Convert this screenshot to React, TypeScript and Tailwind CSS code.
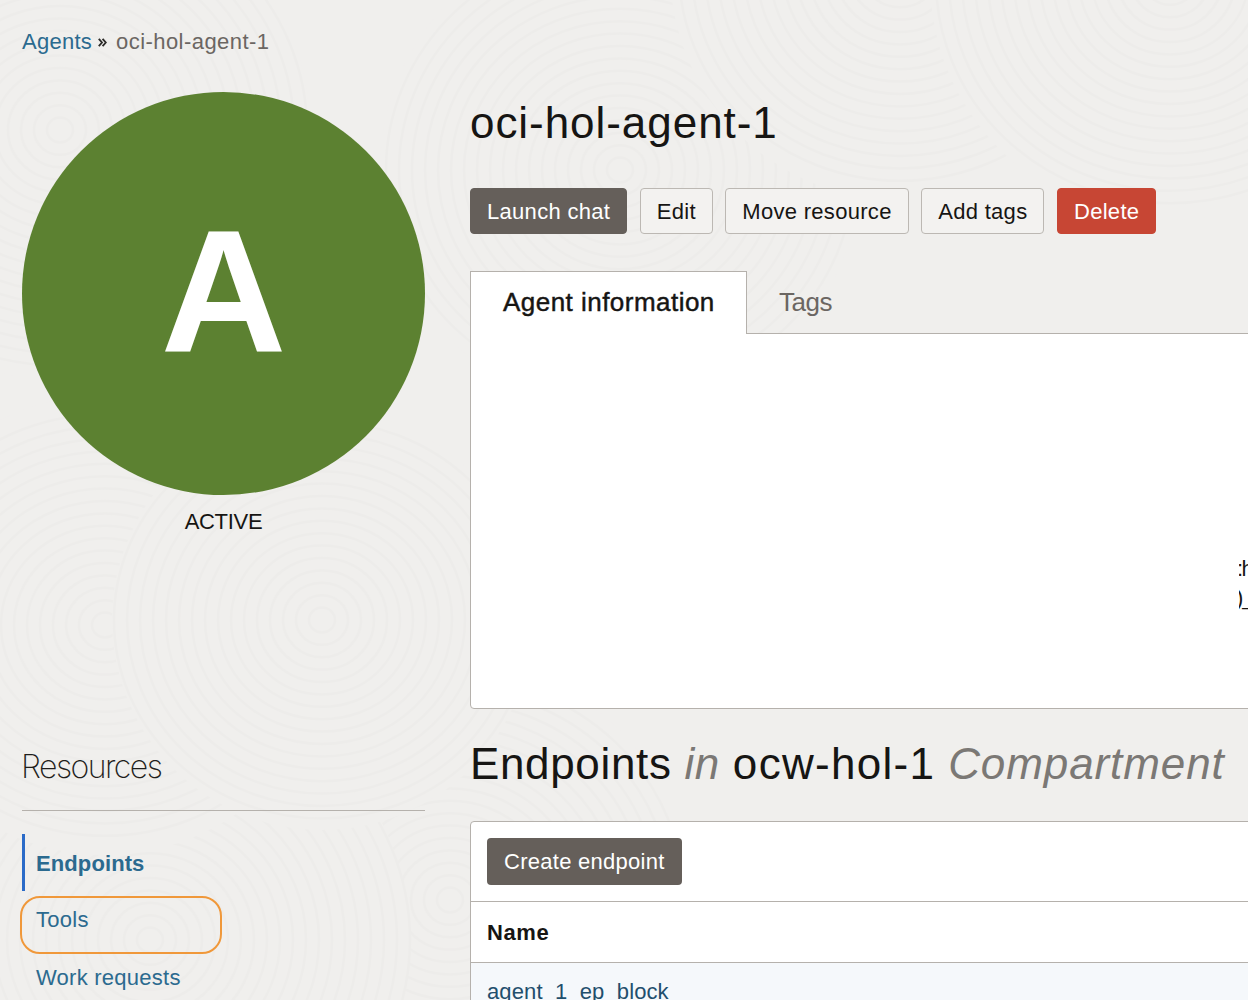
const sans = "font-['Liberation_Sans',Arial,sans-serif]";

// overlapping ring patches for the faint paper texture behind the page
const swirls = [
  { cx: 60, cy: 130, max: 250 },
  { cx: 620, cy: 170, max: 240 },
  { cx: 900, cy: -30, max: 230 },
  { cx: 1170, cy: -20, max: 240 },
  { cx: 450, cy: 900, max: 240 },
  { cx: 150, cy: 940, max: 260 },
  { cx: 105, cy: 625, max: 230 },
  { cx: 322, cy: 620, max: 210 },
];

const Swirls = () => (
  <svg className="absolute inset-0 pointer-events-none" width="1248" height="1000" fill="none" stroke="#edecea" strokeWidth="2.5">
    {swirls.map((s, i) => (
      <g key={i}>
        <circle cx={s.cx} cy={s.cy} r={s.max} fill="#f0efed" stroke="none" />
        {Array.from({ length: Math.floor(s.max / 13) }, (_, k) => (
          <ellipse key={k} cx={s.cx} cy={s.cy} rx={(k + 1) * 13} ry={(k + 1) * 12.4} />
        ))}
      </g>
    ))}
  </svg>
);

const Btn = ({ label, className }: { label: string; className: string }) => (
  <button className={`h-[46px] px-[16px] rounded-[4px] text-[22px] tracking-[0.3px] border ${className}`}>{label}</button>
);

export default function App() {
  return (
    <div className={`relative w-[1248px] h-[1000px] overflow-hidden bg-[#f0efed] text-[#161513] ${sans}`}>
      <Swirls />
      <div className="relative flex h-full">
        {/* left column */}
        <aside className="w-[470px] shrink-0 pl-[22px] pt-[27px]">
          <div className="flex items-center h-[29px] text-[22px] leading-[29px]">
            <span className="text-[#2b6a8f] tracking-[0.25px]">Agents</span>
            <svg className="ml-[6px] mr-[9px] mt-[2px]" width="9" height="9" viewBox="0 0 9 9" fill="none" stroke="#2b2a28" strokeWidth="1.8">
              <path d="M0.8 0.8 L4 4.5 L0.8 8.2 M4.6 0.8 L7.8 4.5 L4.6 8.2" />
            </svg>
            <span className="text-[#6b6662] tracking-[0.45px]">oci-hol-agent-1</span>
          </div>
          <div className="w-[403px] h-[403px] mt-[36px] rounded-full bg-[#5c8131] flex items-center justify-center">
            <span className="text-white font-bold text-[174px] leading-none pb-[4px]">A</span>
          </div>
          <div className="w-[403px] mt-[12px] text-center text-[22px] leading-[29px] tracking-[-0.3px]">ACTIVE</div>
          <div className="w-[403px] mt-[210px] pb-[22px] border-b border-[#b5b1ac] font-['Inter',sans-serif] font-extralight text-[32px] leading-[42px] text-[#1f1e1c]">
            <span className="-ml-[1px] tracking-[-1.55px]">Resources</span>
          </div>
          <div className="w-[403px] mt-[23px] relative">
            <div className="h-[57px] border-l-[3px] border-[#2b6bc8] pl-[11px] pt-[2px] flex items-center font-bold text-[#2b6a8f] text-[22px] tracking-[0.1px]">
              Endpoints
            </div>
            <div className="h-[57px] pl-[14px] pt-[14px] text-[22px] leading-[29px] text-[#2b6a8f] tracking-[0.3px]">Tools</div>
            <div className="pl-[14px] text-[22px] leading-[29px] text-[#2b6a8f] tracking-[0.25px] mt-[15px]">Work requests</div>
            <div className="absolute left-[-2px] top-[62px] w-[202px] h-[58px] rounded-[20px] border-2 border-[#f0983a]" />
          </div>
        </aside>

        {/* main column */}
        <main className="flex-1 min-w-0 pt-[93px]">
          <h1 className="text-[44px] leading-[60px] font-normal tracking-[0.95px]">oci-hol-agent-1</h1>
          <div className="flex gap-[12.5px] mt-[35px]">
            <Btn label="Launch chat" className="bg-[#655f5a] border-[#655f5a] text-white" />
            <Btn label="Edit" className="bg-[#f3f2f0] border-[#bcb8b3]" />
            <Btn label="Move resource" className="bg-[#f3f2f0] border-[#bcb8b3]" />
            <Btn label="Add tags" className="bg-[#f3f2f0] border-[#bcb8b3]" />
            <Btn label="Delete" className="bg-[#c74634] border-[#c74634] text-white" />
          </div>

          <div className="flex h-[63px] mt-[37px] relative z-10">
            <div className="w-[277px] h-[63px] bg-white border border-b-0 border-[#b5b1ac] flex items-center pl-[32px] pb-[1px] text-[26px] tracking-[0.47px] [-webkit-text-stroke:0.45px_#161513]">
              Agent information
            </div>
            <div className="flex-1 h-[63px] border-b border-[#b5b1ac] pl-[32px] flex items-center text-[26px] tracking-[-0.5px] text-[#6b6662]">
              Tags
            </div>
          </div>
          <div className="h-[376px] -mt-[1px] w-[790px] bg-white border border-[#b5b1ac] rounded-bl-[4px] overflow-hidden pt-[220px] pl-[768px] text-[22px] leading-[29px] whitespace-nowrap">
            <div className="overflow-hidden">
              <div className="-ml-[2px] tracking-[-1.5px]">:h</div>
              <div className="-ml-[3px] tracking-[-1px]">)_</div>
            </div>
          </div>

          <h2 className="mt-[25px] text-[44px] leading-[60px] font-normal whitespace-nowrap tracking-[0.65px]">
            Endpoints <em className="text-[#7b7875]">in</em> <span className="tracking-[1.3px]">ocw-hol-1</span>{" "}
            <em className="text-[#7b7875] tracking-[0.9px]">Compartment</em>
          </h2>

          <div className="mt-[27px] w-[790px] bg-white border border-[#b5b1ac] rounded-tl-[4px]">
            <div className="h-[79px] pl-[16px] pt-[16px]">
              <button className="h-[47px] px-[17px] rounded-[4px] bg-[#655f5a] text-white text-[22px] tracking-[0.27px]">Create endpoint</button>
            </div>
            <div className="h-[61px] border-t border-[#b5b1ac] pl-[16px] flex items-center font-bold text-[22px] tracking-[0.6px]">Name</div>
            <div className="h-[60px] border-t border-[#b5b1ac] bg-[#f5f8fb] pl-[16px] pt-[14px] text-[22px] leading-[29px] tracking-[0.12px] text-[#1f4f6d]">
              agent_1_ep_block
            </div>
          </div>
        </main>
      </div>
    </div>
  );
}
